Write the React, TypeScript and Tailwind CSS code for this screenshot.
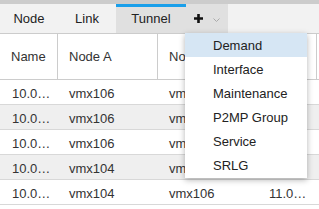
import React from 'react';

const TABS = ['Node', 'Link', 'Tunnel'];
const TAB_WIDTHS: Record<string, string> = { Node: 'w-[58px]', Link: 'w-[58px]', Tunnel: 'w-[70px]' };

const COLUMNS = [
  { label: 'Name', width: 'w-[58px]' },
  { label: 'Node A', width: 'w-[100px]' },
  { label: 'Node Z', width: 'w-[100px]' },
  { label: '', width: 'w-[59px]' },
];

// last column is covered by the open menu except on the bottom row
const ROWS = [
  ['10.0…', 'vmx106', 'vmx101', ''],
  ['10.0…', 'vmx106', 'vmx102', ''],
  ['10.0…', 'vmx106', 'vmx104', ''],
  ['10.0…', 'vmx104', 'vmx106', ''],
  ['10.0…', 'vmx104', 'vmx106', '11.0…'],
];

const MENU_ITEMS = ['Demand', 'Interface', 'Maintenance', 'P2MP Group', 'Service', 'SRLG'];

export const App: React.FC = () => {
  const activeTab = 'Tunnel';
  const hoveredItem = 'Demand';

  return (
    <div className="relative w-[319px] h-[209px] overflow-hidden bg-white text-[13px] font-['Liberation_Sans',Arial,sans-serif]">
      <div className="h-[4px] bg-[#cccccc]" />

      <div className="flex h-[30px] bg-[#f2f2f2] border-b border-[#cccccc] text-[#222]">
        {TABS.map((tab) => (
          <div
            key={tab}
            className={`${TAB_WIDTHS[tab]} flex items-center justify-center ${
              tab === activeTab ? 'bg-[#e0e0e0] border-t-[3px] border-[#1a9fea] pb-[3px]' : ''
            }`}
          >
            {tab}
          </div>
        ))}
        <div className="w-[42px] flex items-center bg-[#e0e0e0] pl-[8px] gap-[10px]">
          <svg width="9" height="9" viewBox="0 0 9 9">
            <path d="M4.5 0V9M0 4.5H9" stroke="#111" strokeWidth="2.6" />
          </svg>
          <svg width="7" height="4" viewBox="0 0 7 4" className="mt-[2px]">
            <path d="M0.5 0.5L3.5 3.5L6.5 0.5" fill="none" stroke="#aaaaaa" strokeWidth="1" />
          </svg>
        </div>
      </div>

      <div className="text-[#333]">
        <div className="flex h-[46px] border-b border-[#cccccc]">
          {COLUMNS.map((col, j) => (
            <div
              key={j}
              className={`${col.width} shrink-0 flex items-center pl-[11px] border-r border-[#cccccc]`}
            >
              {col.label}
            </div>
          ))}
        </div>
        {ROWS.map((row, i) => (
          <div
            key={i}
            className={`flex h-[25px] border-b border-[#d8d8d8] ${i % 2 === 1 ? 'bg-[#efefef]' : 'bg-white'}`}
          >
            {row.map((cell, j) => (
              <div
                key={j}
                className={`${COLUMNS[j].width} shrink-0 flex items-center pt-[3px] ${j === 0 ? 'pl-[12px]' : 'pl-[11px]'} whitespace-nowrap overflow-hidden`}
              >
                {cell}
              </div>
            ))}
          </div>
        ))}
      </div>

      <div className="absolute left-[185px] top-[33px] w-[122px] pb-[1px] bg-white shadow-[0_2px_6px_rgba(0,0,0,0.3)] text-[#222]">
        {MENU_ITEMS.map((item) => (
          <div
            key={item}
            className={`h-[24px] flex items-center pt-[2px] pl-[28px] ${item === hoveredItem ? 'bg-[#d6e6f4]' : ''}`}
          >
            {item}
          </div>
        ))}
      </div>
    </div>
  );
};

export default App;
